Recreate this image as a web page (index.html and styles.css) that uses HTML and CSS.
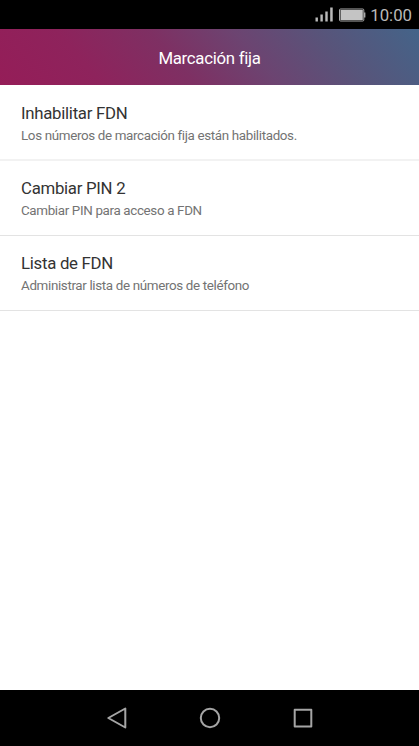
FILE: index.html
```html
<!DOCTYPE html>
<html lang="es">
<head>
    <meta charset="UTF-8">
    <meta name="viewport" content="width=device-width, initial-scale=1.0">
    <title>Marcación fija</title>
    <link rel="stylesheet" href="styles.css">
</head>
<body>
    <div class="status-bar">
        <svg class="signal" width="18" height="15" viewBox="0 0 18 15" fill="#b9b9b9">
            <rect x="0.5" y="10.5" width="2.4" height="4"/>
            <rect x="5.4" y="7.5" width="2.4" height="7"/>
            <rect x="10.3" y="4.5" width="2.4" height="10"/>
            <rect x="15.2" y="0.5" width="2.5" height="14"/>
        </svg>
        <svg class="battery" width="28" height="14" viewBox="0 0 28 14">
            <rect x="1.5" y="1" width="24.3" height="12" rx="1" fill="none" stroke="#aaa"/>
            <rect x="2.5" y="2" width="22.3" height="10" fill="#c4c4c4"/>
            <rect x="26" y="4.5" width="1.4" height="5" fill="#aaa"/>
        </svg>
        <span class="time">10:00</span>
    </div>
    <header>
        <h1>Marcación fija</h1>
    </header>
    <main>
        <ul class="settings">
            <li>
                <h2>Inhabilitar FDN</h2>
                <p>Los números de marcación fija están habilitados.</p>
            </li>
            <li>
                <h2>Cambiar PIN 2</h2>
                <p>Cambiar PIN para acceso a FDN</p>
            </li>
            <li>
                <h2>Lista de FDN</h2>
                <p>Administrar lista de números de teléfono</p>
            </li>
        </ul>
    </main>
    <nav class="nav-bar">
        <svg width="24" height="24" viewBox="0 0 24 24">
            <path d="M20.3 2.5v19L3.3 12z"/>
        </svg>
        <svg width="24" height="24" viewBox="0 0 24 24">
            <circle cx="12" cy="12" r="9.2"/>
        </svg>
        <svg width="24" height="24" viewBox="0 0 24 24">
            <rect x="3.7" y="3.8" width="16.6" height="16.6"/>
        </svg>
    </nav>
</body>
</html>
```

FILE: styles.css
```css
body {
    font-family: Roboto, sans-serif;
    margin: 0;
    padding: 0;
    height: 746px;
    display: flex;
    flex-direction: column;
    background-color: #fff;
}

.status-bar {
    display: flex;
    align-items: center;
    justify-content: flex-end;
    height: 29px;
    padding-right: 7px;
    background-color: #000;
}

.battery {
    margin: 0 4px 0 5px;
}

.time {
    color: #b9b9b9;
    font-size: 16.8px;
    line-height: 19px;
    margin-top: 2px;
}

header {
    display: flex;
    align-items: center;
    justify-content: center;
    height: 56px;
    background: linear-gradient(50deg, #951d58 0%, #8e235c 22%, #7e3063 42%, #6c4471 60%, #58547a 78%, #446489 100%);
}

h1 {
    margin: 2px 0 0;
    font-size: 16.8px;
    font-weight: 400;
    letter-spacing: -0.28px;
    line-height: 20px;
    color: #fff;
}

main {
    flex: 1;
}

.settings {
    list-style: none;
    margin: 0;
    padding: 0;
}

.settings li {
    box-sizing: border-box;
    height: 75px;
    padding: 17px 21px 0;
    border-bottom: 1px solid #e3e3e3;
}

.settings li:first-child {
    height: 76px;
    padding-top: 18px;
    border-bottom: 2px solid #f2f2f2;
}

h2 {
    margin: 0;
    font-size: 16.8px;
    font-weight: 400;
    letter-spacing: -0.28px;
    line-height: 20px;
    color: #333;
}

.settings p {
    margin: 5px 0 0;
    font-size: 13.4px;
    letter-spacing: -0.35px;
    line-height: 16px;
    color: #737373;
}

.nav-bar {
    display: flex;
    align-items: center;
    justify-content: center;
    gap: 69px;
    height: 56px;
    background-color: #000;
}

.nav-bar svg {
    fill: none;
    stroke: #a5a5a5;
    stroke-width: 2;
    stroke-linejoin: round;
}
```
